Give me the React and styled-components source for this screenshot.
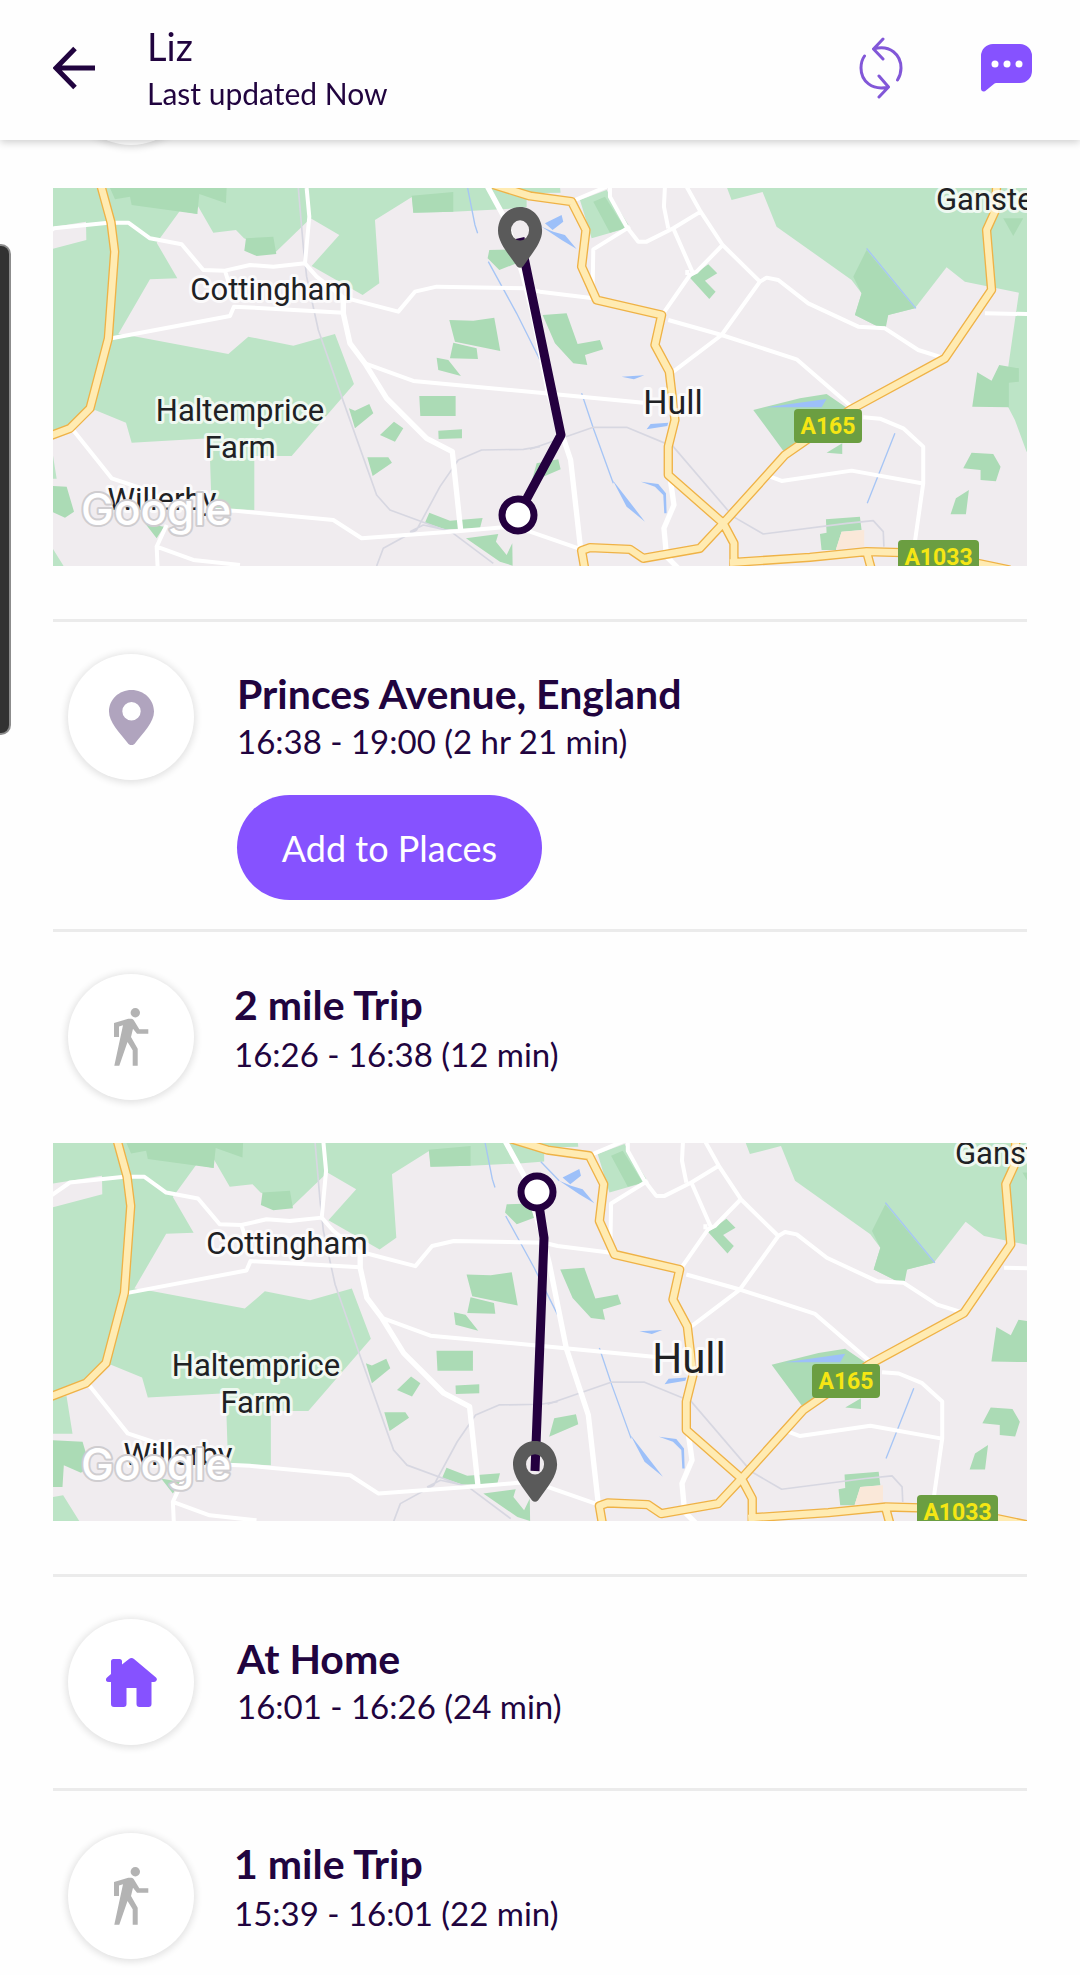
import {useState} from 'react';
import styled, {createGlobalStyle} from 'styled-components';

const GlobalStyle = createGlobalStyle`
  * {
    box-sizing: border-box;
  }

  body {
    margin: 0;
    background-color: #fefefe;
    color: #21043f;
    font-family: Lato, 'Liberation Sans', sans-serif;
  }
`;

const Header = styled.header`
  position: fixed;
  top: 0;
  left: 0;
  right: 0;
  z-index: 2;
  height: 140px;
  padding: 0 48px 5px 53px;
  display: flex;
  align-items: center;
  background-color: #fefefe;
  box-shadow: 0 2px 8px rgba(0, 0, 0, 0.2);
`;

const IconButton = styled.button`
  display: flex;
  padding: 0;
  border: none;
  background: none;
  cursor: pointer;
`;

const HeaderText = styled.div`
  flex: 1;
  margin-left: 50px;
`;

const Name = styled.h1`
  margin: 0 0 4px;
  font-size: 38px;
  line-height: 46px;
  font-weight: 400;
`;

const Updated = styled.p`
  margin: 0;
  font-size: 30px;
  line-height: 40px;
`;

const Actions = styled.div`
  display: flex;
  align-items: center;
  gap: 78px;
`;

const EdgeHandle = styled.div`
  position: fixed;
  top: 244px;
  left: 0;
  z-index: 3;
  width: 11px;
  height: 491px;
  background-color: #323232;
  border: 2px solid #8c8c8c;
  border-left: none;
  border-radius: 0 10px 10px 0;
`;

const Timeline = styled.main`
  padding: 0 53px;
`;

const Entry = styled.section`
  padding-top: ${(props) => props.$top || 42}px;
  padding-bottom: ${(props) => props.$bottom || 43}px;
  border-bottom: ${(props) => (props.$last ? 'none' : '3px solid #ebebeb')};
`;

const EntryRow = styled.div`
  display: flex;
  align-items: flex-start;
  padding-left: 15px;
`;

const Badge = styled.div`
  flex: none;
  width: 126px;
  height: 126px;
  display: flex;
  align-items: center;
  justify-content: center;
  border-radius: 50%;
  background-color: #fff;
  box-shadow: 0 1px 7px 2px rgba(0, 0, 0, 0.11);
`;

const Details = styled.div`
  display: flex;
  flex-direction: column;
  align-items: flex-start;
  margin-left: ${(props) => (props.$trip ? 40 : 43)}px;
  padding-top: ${(props) => (props.$trip ? 8 : 17)}px;
  gap: ${(props) => (props.$trip ? 2 : 0)}px;
`;

const Title = styled.h2`
  margin: 0;
  font-size: 41px;
  line-height: 46px;
  font-weight: 700;
`;

const Time = styled.p`
  margin: 0;
  font-size: 33px;
  line-height: 48px;
`;

const AddButton = styled.button`
  margin-top: 30px;
  height: 105px;
  min-width: 305px;
  padding: 0 42px;
  border: none;
  border-radius: 53px;
  background-color: #8652ff;
  color: #fff;
  font-family: inherit;
  font-size: 36px;
  cursor: pointer;
`;

const MapFrame = styled.svg`
  display: block;
  width: 100%;
  height: auto;
  margin: 43px 0 10px;
  background-color: #f0ecef;
`;

const MapLabel = styled.text`
  font-family: Roboto, 'Liberation Sans', sans-serif;
  font-size: ${(props) => props.$size || 31}px;
  fill: #202124;
  stroke: rgba(255, 255, 255, 0.75);
  stroke-width: 6px;
  stroke-linejoin: round;
  paint-order: stroke;
`;

const RoadNumber = styled.text`
  font-family: Roboto, 'Liberation Sans', sans-serif;
  font-size: 23px;
  font-weight: 700;
  fill: #f5e614;
`;

const MapLogo = styled.text`
  font-family: Inter, 'Liberation Sans', sans-serif;
  font-size: 44px;
  font-weight: 500;
  fill: #fff;
  stroke: #cfcdd0;
  stroke-width: 4px;
  stroke-linejoin: round;
  paint-order: stroke;
`;

const BackIcon = () => (
  <svg width='44' height='44' viewBox='0 0 44 44' fill='none' stroke='#21043f' strokeWidth='5'>
    <path d='M42 22H4M22 2.500L3 22l19 19.500' />
  </svg>
);

const RefreshIcon = () => (
  <svg
    width='44'
    height='62'
    viewBox='0 0 44 62'
    fill='none'
    stroke='#8257d8'
    strokeWidth='3'
    strokeLinecap='round'
    strokeLinejoin='round'
  >
    <path d='M24 2L14.500 12l9.500 10M14.500 12C31 7 42 18 42 31c0 4-1 8-3.500 12' />
    <path d='M20 60l9.500-10L20 39M29.500 50C13 54 2 44 2 31c0-4.500 1-8.500 3.500-12' />
  </svg>
);

const ChatIcon = () => (
  <svg width='51' height='48' viewBox='0 0 51 48'>
    <path
      d='M12 0h27a12 12 0 0 1 12 12v15a12 12 0 0 1-12 12H15l-1.500.5L4 47.300Q0 48 0 44.500V12A12 12 0 0 1 12 0z'
      fill='#8652ff'
    />
    <circle cx='14' cy='20' r='3.500' fill='#fff' />
    <circle cx='26' cy='20' r='3.500' fill='#fff' />
    <circle cx='38' cy='20' r='3.500' fill='#fff' />
  </svg>
);

const PIN =
  'M22.500 0C10 0 0 9.500 0 21.500 0 32 10 42 19.500 54q3 2.500 6 0C35 42 45 32 45 21.500 45 9.500 35 0 22.500 0zm0 12a9.200 9.200 0 1 1 0 18.400 9.200 9.200 0 0 1 0-18.400z';

const PinIcon = () => (
  <svg width='45' height='55' viewBox='0 0 45 55'>
    <path d={PIN} fill='#b0a4be' />
  </svg>
);

const WalkIcon = () => (
  <svg width='35' height='58' viewBox='0 0 35 58' fill='#b3b3b3'>
    <circle cx='21.300' cy='4.700' r='4.700' />
    <path d='M0 15l14.300-4.300h3.200q1.500 0 2.300 1.500l5.500 9H34.300v4.500H23l-4-5-2 8.300 6.700 11.700v17h-5V42.300L13.500 34 5.300 57.700H.3L9 17.300l-4 1.200V29H0z' />
  </svg>
);

const HomeIcon = () => (
  <svg width='51' height='49' viewBox='0 0 51 49' fill='#8652ff'>
    <path d='M23 1q2.500-2 5 0l22 18.500q1.500 1.500.5 3t-3 1.500h-2V46q0 3-3 3h-9q-3 0-3-3V30h-10v16q0 3-3 3H8q-3 0-3-3V24H3q-2.500 0-3-1.500t1-3L5 16V3.500Q5 1 7.500 1h6Q16 1 16 3.500V6.500z' />
  </svg>
);

// The base map is traced in two tiles, the east one starts 1470 units to the right.
const Layer = ({west, east, ...props}) => (
  <g {...props}>
    {west && <path d={west} />}
    {east && <path d={east} transform='translate(1470 0)' />}
  </g>
);

const green = {
  west:
    'M-20 20H1460V82L1385 88 1240 95 1120 98 1117 50 1005 120 1018 310 968 345 815 258 898 165 812 115 708 215 612 175 588 150 520 158 472 75 462 40 472 102 420 92 350 188 412 295 330 298 235 462 290 470 565 522 625 470 760 497 885 462 942 612 755 828H643V990L515 985 508 775 275 788 258 728 165 690 90 745-20 775V222L139 180 138 125-20 150z' +
    'M-20 793L32 783 50 896H-20zM-20 1087L22 1080 72 1160H-20z',
  east:
    'M-30 20H90L92 38-20 40zM150 60L230 30 300 142 185 175z' +
    'M590 20L605 60 698 36 740 140 965 300 995 340 975 405 1045 440 1075 405 1155 385 1250 262 1305 305 1467 338 1435 560V682L1455 720 1490 815H1600V20z',
};

const park = {
  west:
    'M210 24H560L558 70 478 42 472 102 275 75 270 50 225 58zM1115 47L1240 36V95L1120 98zM618 175L700 170 709 222 650 228 613 212z' +
    'M1348 210L1420 208 1430 250 1378 270 1343 235zM1228 420L1300 422 1363 413 1381 513 1245 485zM1240 488L1310 505 1314 537 1230 535z' +
    'M1190 533L1225 540 1263 588 1195 570zM1138 648H1247V708H1141zM1195 752L1266 748V775L1196 777z' +
    'M927 685L945 692 988 672 1000 700 945 745zM1062 725L1090 745 1065 785 1020 765zM982 832H1045L1056 848 998 888z' +
    'M1168 998L1230 1022 1328 1014 1320 1045 1215 1048 1155 1028zM1278 1075L1375 1062 1368 1085 1400 1125 1417 1090 1418 1157 1380 1145z' +
    'M315 1030L372 1040 350 1075zM-20 915L80 920 102 995 75 1013 24 990 20 1055H-20z',
  east:
    'M190 65L225 50 285 145 240 158zM1010 210L1155 385 1075 405 1068 440H1045L975 405 995 340 970 290z' +
    'M1342 577L1385 602 1408 555 1467 565V605L1437 608V682L1327 680zM1325 818L1390 822 1412 860 1398 904 1352 900V870L1300 865z' +
    'M1317 930L1308 1003H1262L1278 955zM1420 115H1480L1450 168zM670 690L810 655 890 642 960 690 800 800 760 812z' +
    'M937 790V822L890 818zM480 293L535 253 562 280 525 302 557 335 538 357zM38 405L110 400 143 492 210 480 220 508 165 525 172 555 130 550 75 490z' +
    'M20 850L85 838 92 868 5 905zM888 1018L990 1010 995 1050 935 1055 918 1110H875L870 1062 890 1058z',
};

const water = {
  east:
    'M45 130L95 105 100 125 68 150zM35 140L70 155 105 165 140 207 95 180zM275 590L343 586 312 598zM350 748L362 732 415 728 412 738z' +
    'M333 905L385 912 408 940 410 1000 403 1000 400 945 375 920zM248 900L345 1025 290 980zM710 682L890 657 875 682z',
};

const stream = {
  west: 'M1283 24L1305 135 1313 160M1345 245L1430 400 1500 540',
  east: 'M-20 83L35 140M155 640L192 750 250 910M1010 205L1158 385M1095 760L1012 970',
};

const rail = {
  west:
    'M775 24L790 200 800 290 835 450 905 650 1010 945 1050 990 1240 1060 1360 1150' +
    'M1010 1158L1030 1105 1130 1050 1200 920 1255 840 1325 810 1450 808 1500 800M1110 1055L1150 1035 1240 1055',
  east: 'M0 808L190 742H290L430 800 610 1010 700 1062 950 1030 1030 1022 1060 1055 1062 1100',
};

const road = {
  west:
    'M-20 188L42 145 205 128H265L330 175 425 193 490 270 555 272 630 255 700 260 795 250 808 110 800 24' +
    'M795 250L830 290 910 352 1075 395 1125 335 1190 320 1460 325 1500 335 1660 355M215 475L570 408 582 380 910 398M555 272L570 320' +
    'M975 550L1120 603 1500 638 1810 668M95 745L215 895 290 920 430 985 580 992 880 1020 965 1075 1262 1053 1390 1042 1470 1055 1620 1107' +
    'M380 1035L350 1100 460 1140 600 1155M350 1100L353 1165',
  east:
    'M135 60L230 20M240 20V50L290 140 325 185H350L430 145 512 95M405 20L402 80 415 145M470 20L512 95 578 195 690 305 575 465 430 575' +
    'M690 305L710 293 745 300 835 370 985 440 1065 445 1165 510 1245 535M578 195L500 275 480 285 400 400M430 145L487 275' +
    'M300 140L190 208 188 330M415 420L575 465 800 538 970 685M1000 712L1050 716 1120 745 1180 800V910L1155 1085' +
    'M715 888L755 903 965 872 1175 910M1365 400L1600 404M472 270V285',
};

const wideRoad = {
  west: 'M1340 15L1400 125 1450 290 1476 390 1526 640 1592 840 1622 1107M910 355V400L930 490 975 550 1040 655 1160 775 1237 815 1262 1050',
  east: 'M420 890L432 975 402 1045 410 1130 445 1165',
};

const mainRoad = {
  west: 'M182 14L213 127 224 215 205 475 150 685 90 745-20 787',
  east:
    'M-110 14L0 48 125 65 168 150 155 260 200 360 395 405 375 495 418 575 435 720 415 800V885L580 1030 612 1090V1170' +
    'M1400 20L1395 95 1370 150 1385 330 1245 535 960 690 765 825 580 1030 510 1105 340 1135 300 1108 180 1103 155 1112 165 1170' +
    'M600 1148L840 1132 1010 1115 1200 1120 1440 1170M1010 1115L1025 1170',
};

const BaseMap = ({transform}) => (
  <g transform={transform} strokeLinejoin='round'>
    <Layer {...green} fill='#bce4c6' />
    <Layer {...park} fill='#abdbb5' />
    <path d='M2405 1055L2473 1050V1100L2388 1108z' fill='#fae8d9' />
    <Layer {...water} fill='#9dc0f9' />
    <Layer {...stream} fill='none' stroke='#a6c5f5' strokeWidth='4' />
    <Layer {...rail} fill='none' stroke='#d7d7e1' strokeWidth='5' />
    <Layer {...road} fill='none' stroke='#fff' strokeWidth='12' />
    <Layer {...wideRoad} fill='none' stroke='#fff' strokeWidth='16' />
    <Layer {...mainRoad} fill='none' stroke='#efb246' strokeWidth='28' />
    <Layer {...mainRoad} fill='none' stroke='#ffebb2' strokeWidth='20' />
  </g>
);

const RoadSign = ({x, y, width, children}) => (
  <g>
    <rect x={x} y={y} width={width} height='34' rx='4' fill='#6b9e41' />
    <RoadNumber x={x + width / 2} y={y + 25} textAnchor='middle'>
      {children}
    </RoadNumber>
  </g>
);

const TripMap = ({transform, labels, signs, route, start, pin}) => (
  <MapFrame viewBox='0 0 974 378' role='img' aria-label='Map of the trip around Hull'>
    <BaseMap transform={transform} />
    {labels.map((label) => (
      <MapLabel
        key={label.text}
        x={label.x}
        y={label.y}
        $size={label.size}
        textAnchor={label.anchor || 'middle'}
      >
        {label.text}
      </MapLabel>
    ))}
    {signs.map((sign) => (
      <RoadSign key={sign.text} x={sign.x} y={sign.y} width={sign.width}>
        {sign.text}
      </RoadSign>
    ))}
    <MapLogo x='28' y='337'>
      Google
    </MapLogo>
    <path d={route} fill='none' stroke='#24003f' strokeWidth='9' strokeLinejoin='round' />
    <circle cx={start.x} cy={start.y} r='16' fill='#fff' stroke='#24003f' strokeWidth='7' />
    <path d={PIN} fill='#5a5a5a' transform={`translate(${pin.x - 22} ${pin.y}) scale(0.98 1.1)`} />
  </MapFrame>
);

const firstTrip = {
  transform: 'translate(-13 -8) scale(0.3333)',
  labels: [
    {text: 'Cottingham', x: 218, y: 112},
    {text: 'Haltemprice', x: 187, y: 233},
    {text: 'Farm', x: 187, y: 270},
    {text: 'Willerby', x: 109, y: 322},
    {text: 'Hull', x: 620, y: 226, size: 34},
    {text: 'Ganstead', x: 883, y: 22, anchor: 'start'},
  ],
  signs: [
    {text: 'A165', x: 741, y: 221, width: 68},
    {text: 'A1033', x: 845, y: 352, width: 81},
  ],
  route: 'M467 50L508 247 465 327',
  start: {x: 465, y: 327},
  pin: {x: 467, y: 19},
};

const secondTrip = {
  transform: 'translate(2.8 -9) scale(0.3345)',
  labels: [
    {text: 'Cottingham', x: 234, y: 111},
    {text: 'Haltemprice', x: 203, y: 233},
    {text: 'Farm', x: 203, y: 270},
    {text: 'Willerby', x: 125, y: 322},
    {text: 'Hull', x: 636, y: 230, size: 42},
    {text: 'Ganstead', x: 902, y: 21, anchor: 'start'},
  ],
  signs: [
    {text: 'A165', x: 759, y: 221, width: 68},
    {text: 'A1033', x: 864, y: 352, width: 81},
  ],
  route: 'M484 49L491 95 482 328',
  start: {x: 484, y: 49},
  pin: {x: 482, y: 298},
};

const App = () => {
  const [saved, setSaved] = useState(false);

  const addPlace = () => {
    setSaved(!saved);
  };

  return (
    <>
      <GlobalStyle />
      <Header>
        <IconButton type='button' aria-label='Back'>
          <BackIcon />
        </IconButton>
        <HeaderText>
          <Name>Liz</Name>
          <Updated>Last updated Now</Updated>
        </HeaderText>
        <Actions>
          <IconButton type='button' aria-label='Refresh'>
            <RefreshIcon />
          </IconButton>
          <IconButton type='button' aria-label='Messages'>
            <ChatIcon />
          </IconButton>
        </Actions>
      </Header>
      <EdgeHandle />

      <Timeline>
        <Entry $top={19}>
          <EntryRow>
            <Badge />
          </EntryRow>
          <TripMap {...firstTrip} />
        </Entry>

        <Entry $top={32} $bottom={29}>
          <EntryRow>
            <Badge>
              <PinIcon />
            </Badge>
            <Details>
              <Title>Princes Avenue, England</Title>
              <Time>16:38 - 19:00 (2 hr 21 min)</Time>
              <AddButton type='button' aria-pressed={saved} onClick={addPlace}>
                Add to Places
              </AddButton>
            </Details>
          </EntryRow>
        </Entry>

        <Entry>
          <EntryRow>
            <Badge>
              <WalkIcon />
            </Badge>
            <Details $trip>
              <Title>2 mile Trip</Title>
              <Time>16:26 - 16:38 (12 min)</Time>
            </Details>
          </EntryRow>
          <TripMap {...secondTrip} />
        </Entry>

        <Entry>
          <EntryRow>
            <Badge>
              <HomeIcon />
            </Badge>
            <Details>
              <Title>At Home</Title>
              <Time>16:01 - 16:26 (24 min)</Time>
            </Details>
          </EntryRow>
        </Entry>

        <Entry $bottom={16} $last>
          <EntryRow>
            <Badge>
              <WalkIcon />
            </Badge>
            <Details $trip>
              <Title>1 mile Trip</Title>
              <Time>15:39 - 16:01 (22 min)</Time>
            </Details>
          </EntryRow>
        </Entry>
      </Timeline>
    </>
  );
};

export default App;
